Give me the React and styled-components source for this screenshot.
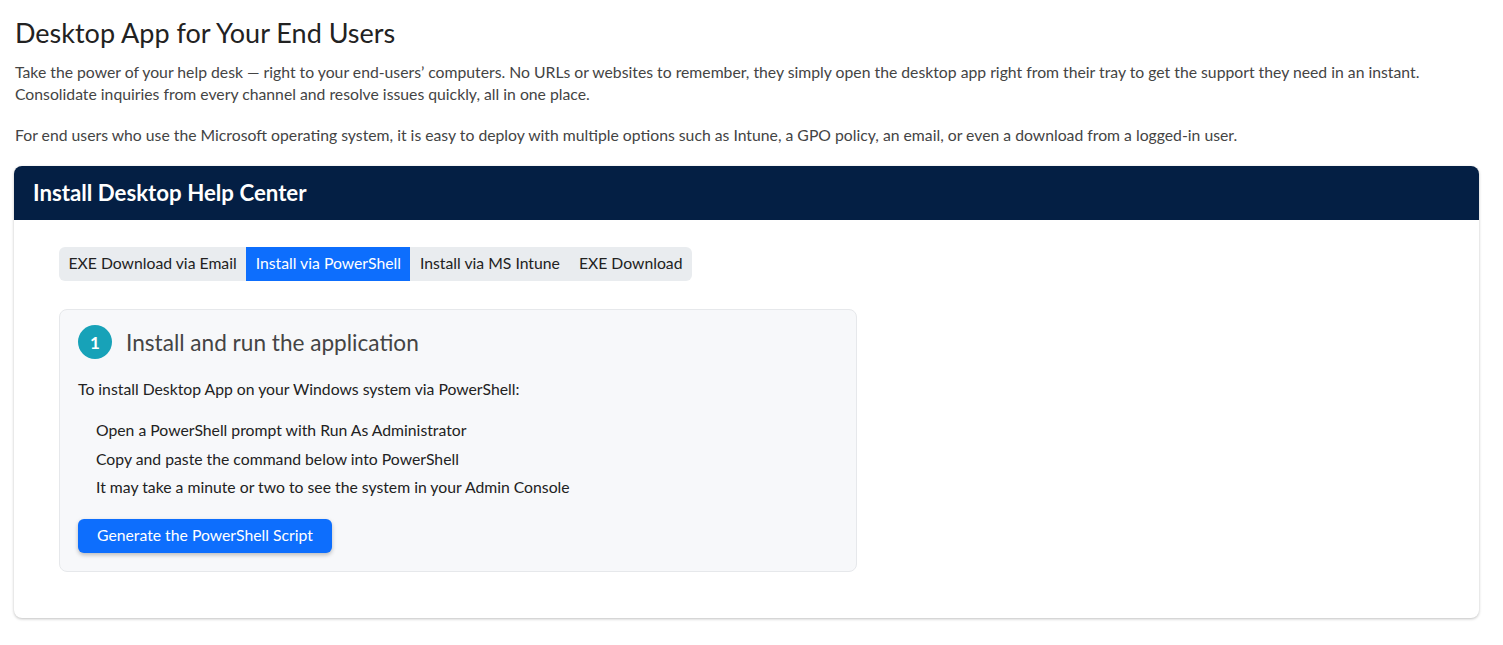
import React from "react";
import styled, { createGlobalStyle } from "styled-components";

const GlobalStyle = createGlobalStyle`
  body {
    margin: 0;
    background: #fff;
    font-family: Lato, "Open Sans", sans-serif;
    color: #333;
  }
`;

const tabs = [
  "EXE Download via Email",
  "Install via PowerShell",
  "Install via MS Intune",
  "EXE Download",
];

const steps = [
  "Open a PowerShell prompt with Run As Administrator",
  "Copy and paste the command below into PowerShell",
  "It may take a minute or two to see the system in your Admin Console",
];

const App = () => {
  return (
    <Page>
      <GlobalStyle />
      <Title>Desktop App for Your End Users</Title>
      <Intro>
        Take the power of your help desk — right to your end-users’ computers. No URLs or websites to
        remember, they simply open the desktop app right from their tray to get the support they need in
        an instant.
        <br />
        Consolidate inquiries from every channel and resolve issues quickly, all in one place.
      </Intro>
      <Intro>
        For end users who use the Microsoft operating system, it is easy to deploy with multiple options
        such as Intune, a GPO policy, an email, or even a download from a logged-in user.
      </Intro>

      <Card>
        <CardHeader>Install Desktop Help Center</CardHeader>
        <CardBody>
          <Tabs>
            {tabs.map((t) => (
              <Tab key={t} $active={t === "Install via PowerShell"}>
                {t}
              </Tab>
            ))}
          </Tabs>

          <Step>
            <StepHead>
              <StepNumber>1</StepNumber>
              <StepTitle>Install and run the application</StepTitle>
            </StepHead>
            <StepText>To install Desktop App on your Windows system via PowerShell:</StepText>
            <StepList>
              {steps.map((s) => (
                <li key={s}>{s}</li>
              ))}
            </StepList>
            <Button>Generate the PowerShell Script</Button>
          </Step>
        </CardBody>
      </Card>
    </Page>
  );
};

export default App;

const Page = styled.div`
  padding: 16px 24px 24px 14px;
`;

const Title = styled.h1`
  margin: 0 0 0 1px;
  font-size: 27px;
  font-weight: 400;
  line-height: 34px;
  color: #222;
`;

const Intro = styled.p`
  margin: 11px 0 19px 1px;
  font-size: 15.75px;
  line-height: 22px;
  color: #444;

  & + & {
    margin-top: 0;
    margin-bottom: 20px;
  }
`;

const Card = styled.div`
  background: #fff;
  border-radius: 8px;
  box-shadow: 0 1px 3px rgba(0, 0, 0, 0.25);
  overflow: hidden;
`;

const CardHeader = styled.div`
  height: 54px;
  box-sizing: border-box;
  display: flex;
  align-items: center;
  padding: 0 19px 2px;
  background: #041f44;
  color: #fff;
  font-size: 22.25px;
  font-weight: 700;
`;

const CardBody = styled.div`
  padding: 27px 45px 46px;
`;

const Tabs = styled.div`
  display: inline-flex;
  background: #e9ecef;
  border-radius: 6px;
  overflow: hidden;
`;

const Tab = styled.div`
  height: 34px;
  box-sizing: border-box;
  display: flex;
  align-items: center;
  padding: 0 9.5px 3px;
  font-size: 15.75px;
  color: ${(p) => (p.$active ? "#fff" : "#222")};
  background: ${(p) => (p.$active ? "#0d6efd" : "transparent")};
`;

const Step = styled.div`
  width: 798px;
  box-sizing: border-box;
  margin-top: 28px;
  padding: 15px 18px 18px;
  background: #f7f8fa;
  border: 1px solid #e6e8eb;
  border-radius: 8px;
`;

const StepHead = styled.div`
  display: flex;
  align-items: center;
  gap: 14px;
`;

const StepNumber = styled.div`
  width: 34px;
  height: 34px;
  border-radius: 50%;
  background: #17a2b8;
  color: #fff;
  font-size: 17px;
  font-weight: 700;
  display: flex;
  align-items: center;
  justify-content: center;
`;

const StepTitle = styled.h3`
  margin: 0;
  font-size: 22.6px;
  font-weight: 400;
  color: #444;
`;

const StepText = styled.p`
  margin: 19px 0 16px;
  font-size: 15.75px;
  line-height: 22px;
  color: #222;
`;

const StepList = styled.ul`
  list-style: none;
  margin: 0 0 17px;
  padding: 0 0 0 18px;

  li {
    font-size: 15.75px;
    line-height: 28.5px;
    color: #222;
  }
`;

const Button = styled.button`
  height: 34px;
  padding: 0 19px 2px;
  border: none;
  border-radius: 6px;
  background: #0d6efd;
  color: #fff;
  font-family: inherit;
  font-size: 15.75px;
  box-shadow: 0 2px 4px rgba(0, 0, 0, 0.25);
  cursor: pointer;
`;
